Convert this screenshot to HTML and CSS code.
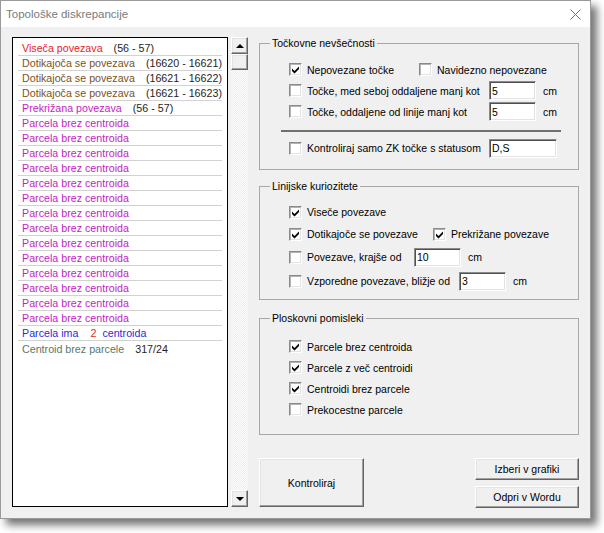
FILE: index.html
```html
<!DOCTYPE html>
<html>
<head>
<meta charset="utf-8">
<title>Topološke diskrepancije</title>
<link rel="stylesheet" href="styles.css">
</head>
<body>
<div class="window">
  <div class="titlebar">
    <span class="title">Topološke diskrepancije</span>
    <svg class="close" viewBox="0 0 11 11" width="11" height="11"><path d="M0.5 0.5 L10.5 10.5 M10.5 0.5 L0.5 10.5" stroke="#6e6e6e" stroke-width="1" fill="none"/></svg>
  </div>
  <div class="client">
    <div class="listbox">
      <div class="row"><span class="c-red">Viseča povezava</span><span class="num">(56 - 57)</span></div>
      <div class="row"><span class="c-brown">Dotikajoča se povezava</span><span class="num">(16620 - 16621)</span></div>
      <div class="row"><span class="c-brown">Dotikajoča se povezava</span><span class="num">(16621 - 16622)</span></div>
      <div class="row"><span class="c-brown">Dotikajoča se povezava</span><span class="num">(16621 - 16623)</span></div>
      <div class="row"><span class="c-mag">Prekrižana povezava</span><span class="num">(56 - 57)</span></div>
      <div class="row"><span class="c-mag">Parcela brez centroida</span></div>
      <div class="row"><span class="c-mag">Parcela brez centroida</span></div>
      <div class="row"><span class="c-mag">Parcela brez centroida</span></div>
      <div class="row"><span class="c-mag">Parcela brez centroida</span></div>
      <div class="row"><span class="c-mag">Parcela brez centroida</span></div>
      <div class="row"><span class="c-mag">Parcela brez centroida</span></div>
      <div class="row"><span class="c-mag">Parcela brez centroida</span></div>
      <div class="row"><span class="c-mag">Parcela brez centroida</span></div>
      <div class="row"><span class="c-mag">Parcela brez centroida</span></div>
      <div class="row"><span class="c-mag">Parcela brez centroida</span></div>
      <div class="row"><span class="c-mag">Parcela brez centroida</span></div>
      <div class="row"><span class="c-mag">Parcela brez centroida</span></div>
      <div class="row"><span class="c-mag">Parcela brez centroida</span></div>
      <div class="row"><span class="c-mag">Parcela brez centroida</span></div>
      <div class="row"><span class="c-blue">Parcela ima</span><span class="c-red two">2</span><span class="c-blue word">centroida</span></div>
      <div class="row"><span class="c-teal">Centroid brez parcele</span><span class="num">317/24</span></div>
    </div>
    <div class="scrollbar">
      <div class="sb-btn"><span class="arrow-up"></span></div>
      <div class="sb-thumb"></div>
      <div class="sb-track"></div>
      <div class="sb-btn"><span class="arrow-down"></span></div>
    </div>
    <div class="panel">
      <fieldset class="group g1">
        <legend>Točkovne nevšečnosti</legend>
        <div class="line">
          <label class="opt w130"><span class="cb"><svg viewBox="0 0 11 11" width="11" height="11"><path d="M2 4.5 L4.5 7 L9 2.5 L9 5 L4.5 9.5 L2 7 Z" fill="#000"/></svg></span>Nepovezane točke</label>
          <label class="opt"><span class="cb"></span>Navidezno nepovezane</label>
        </div>
        <div class="line">
          <label class="opt w200"><span class="cb"></span>Točke, med seboj oddaljene manj kot</label>
          <input class="field w47" type="text" value="5"><span class="unit">cm</span>
        </div>
        <div class="line">
          <label class="opt w200"><span class="cb"></span>Točke, oddaljene od linije manj kot</label>
          <input class="field w47" type="text" value="5"><span class="unit">cm</span>
        </div>
        <div class="sep"></div>
        <div class="line tall">
          <label class="opt w200"><span class="cb"></span>Kontroliraj samo ZK točke s statusom</label>
          <input class="field w68" type="text" value="D,S">
        </div>
      </fieldset>

      <fieldset class="group g2">
        <legend>Linijske kuriozitete</legend>
        <div class="line h22">
          <label class="opt"><span class="cb"><svg viewBox="0 0 11 11" width="11" height="11"><path d="M2 4.5 L4.5 7 L9 2.5 L9 5 L4.5 9.5 L2 7 Z" fill="#000"/></svg></span>Viseče povezave</label>
        </div>
        <div class="line h22">
          <label class="opt w144"><span class="cb"><svg viewBox="0 0 11 11" width="11" height="11"><path d="M2 4.5 L4.5 7 L9 2.5 L9 5 L4.5 9.5 L2 7 Z" fill="#000"/></svg></span>Dotikajoče se povezave</label>
          <label class="opt"><span class="cb"><svg viewBox="0 0 11 11" width="11" height="11"><path d="M2 4.5 L4.5 7 L9 2.5 L9 5 L4.5 9.5 L2 7 Z" fill="#000"/></svg></span>Prekrižane povezave</label>
        </div>
        <div class="line h24">
          <label class="opt w125"><span class="cb"></span>Povezave, krajše od</label>
          <input class="field w47" type="text" value="10"><span class="unit">cm</span>
        </div>
        <div class="line h24">
          <label class="opt w170"><span class="cb"></span>Vzporedne povezave, bližje od</label>
          <input class="field w47" type="text" value="3"><span class="unit">cm</span>
        </div>
      </fieldset>

      <fieldset class="group g3">
        <legend>Ploskovni pomisleki</legend>
        <div class="line">
          <label class="opt"><span class="cb"><svg viewBox="0 0 11 11" width="11" height="11"><path d="M2 4.5 L4.5 7 L9 2.5 L9 5 L4.5 9.5 L2 7 Z" fill="#000"/></svg></span>Parcele brez centroida</label>
        </div>
        <div class="line">
          <label class="opt"><span class="cb"><svg viewBox="0 0 11 11" width="11" height="11"><path d="M2 4.5 L4.5 7 L9 2.5 L9 5 L4.5 9.5 L2 7 Z" fill="#000"/></svg></span>Parcele z več centroidi</label>
        </div>
        <div class="line">
          <label class="opt"><span class="cb"><svg viewBox="0 0 11 11" width="11" height="11"><path d="M2 4.5 L4.5 7 L9 2.5 L9 5 L4.5 9.5 L2 7 Z" fill="#000"/></svg></span>Centroidi brez parcele</label>
        </div>
        <div class="line">
          <label class="opt"><span class="cb"></span>Prekocestne parcele</label>
        </div>
      </fieldset>

      <div class="buttons">
        <button class="btn big">Kontroliraj</button>
        <div class="btn-stack">
          <button class="btn small">Izberi v grafiki</button>
          <button class="btn small">Odpri v Wordu</button>
        </div>
      </div>
    </div>
  </div>
</div>
</body>
</html>
```

FILE: styles.css
```css
* { box-sizing: border-box; }
html, body { margin: 0; padding: 0; background: #fff; }
body {
  width: 604px;
  height: 533px;
  overflow: hidden;
  font-family: "Liberation Sans", Arial, sans-serif;
  font-size: 11px;
  color: #000;
}
.window {
  width: 591px;
  height: 519px;
  border: 1px solid #9a9a9a;
  background: #f0f0f0;
  box-shadow: 6px 6px 8px rgba(0, 0, 0, 0.55);
  display: flex;
  flex-direction: column;
}
.titlebar {
  height: 26px;
  flex-shrink: 0;
  background: #fff;
  display: flex;
  align-items: center;
  justify-content: space-between;
  padding: 0 9px 0 5px;
}
.title { font-size: 11.5px; color: #7a7a7a; }
.close { display: block; margin-top: 1px; }

.client {
  flex: 1;
  display: flex;
  padding: 10px 11px 11px 11px;
}

/* list */
.listbox {
  width: 216px;
  height: 470px;
  border: 1px solid #000;
  background: #fff;
  padding: 3px 5px 0 5px;
}
.row {
  height: 15px;
  border-bottom: 1px solid #d2d2d2;
  display: flex;
  align-items: center;
  padding-left: 4px;
  font-size: 10.7px;
  white-space: nowrap;
}
.row:last-child { border-bottom: none; }
.num { color: #1e1e1e; margin-left: 11px; }
.c-red { color: #e3262a; }
.c-brown { color: #7b5322; }
.c-mag { color: #c41ec4; }
.c-blue { color: #2b2bd6; }
.c-teal { color: #587868; }
.two { margin-left: 12px; }
.word { margin-left: 6px; }

/* scrollbar */
.scrollbar {
  width: 17px;
  height: 470px;
  margin-left: 3px;
  display: flex;
  flex-direction: column;
}
.sb-btn, .sb-thumb {
  height: 17px;
  flex-shrink: 0;
  background: #f0f0f0;
  border: 1px solid;
  border-color: #fff #646464 #646464 #fff;
  box-shadow: inset -1px -1px #a0a0a0, inset 1px 1px #e3e3e3;
  display: flex;
  align-items: center;
  justify-content: center;
}
.sb-thumb { height: 16px; }
.sb-track {
  flex: 1;
  background: repeating-conic-gradient(#ffffff 0 25%, #ececec 0 50%) 0 0 / 2px 2px;
}
.arrow-up, .arrow-down {
  width: 0;
  height: 0;
  border-left: 4px solid transparent;
  border-right: 4px solid transparent;
}
.arrow-up { border-bottom: 4px solid #000; }
.arrow-down { border-top: 4px solid #000; }

/* right panel */
.panel {
  width: 320px;
  margin-left: 11px;
  display: flex;
  flex-direction: column;
  font-size: 10.5px;
}
.group {
  margin: 0;
  padding: 0;
  min-width: 0;
  border: 1px solid #a8a8a8;
}
.group legend {
  margin-left: 10px;
  padding: 0 2px;
  line-height: 13px;
  font-size: 10.5px;
}
.g1 { padding: 9px 0 10px 0; }
.g2 { margin-top: 10px; padding: 8px 0 6px 0; }
.g3 { margin-top: 12px; padding: 11px 0 14px 0; }

.line {
  height: 21px;
  display: flex;
  align-items: center;
  padding-left: 29px;
  white-space: nowrap;
}
.line.tall, .line.h22 { height: 22px; }
.line.h24 { height: 24px; }
.sep {
  height: 2px;
  background: #707070;
  margin: 8px 17px 5px 21px;
}

.opt {
  display: flex;
  align-items: center;
  flex-shrink: 0;
  white-space: nowrap;
}
.w125 { width: 125px; }
.w130 { width: 130px; }
.w144 { width: 144px; }
.w170 { width: 170px; }
.w200 { width: 200px; }

.cb {
  width: 13px;
  height: 13px;
  margin-right: 5px;
  flex-shrink: 0;
  background: #fff;
  border: 1px solid;
  border-color: #8a8a8a #fff #fff #8a8a8a;
  box-shadow: inset 1px 1px #b4b4b4, inset -1px -1px #e3e3e3;
  display: flex;
  align-items: center;
  justify-content: center;
}
.cb svg { display: block; }

.field {
  height: 19px;
  margin: 0;
  padding: 0 2px;
  font: inherit;
  font-size: 10.5px;
  color: #000;
  background: #fff;
  border: 1px solid;
  border-color: #8a8a8a #fff #fff #8a8a8a;
  box-shadow: inset 1px 1px #505050, inset -1px -1px #e3e3e3;
  outline: none;
}
.w47 { width: 47px; }
.w68 { width: 68px; }
.unit { margin-left: 7px; }

.buttons {
  margin-top: 23px;
  display: flex;
  justify-content: space-between;
}
.btn {
  margin: 0;
  padding: 0;
  font: inherit;
  font-size: 10.5px;
  color: #000;
  background: #f0f0f0;
  border: 1px solid;
  border-color: #fff #646464 #646464 #fff;
  box-shadow: inset -1px -1px #a0a0a0, inset 1px 1px #e3e3e3;
}
.btn.big { width: 105px; height: 49px; }
.btn-stack {
  display: flex;
  flex-direction: column;
  gap: 6px;
}
.btn.small { width: 104px; height: 22px; }
```
